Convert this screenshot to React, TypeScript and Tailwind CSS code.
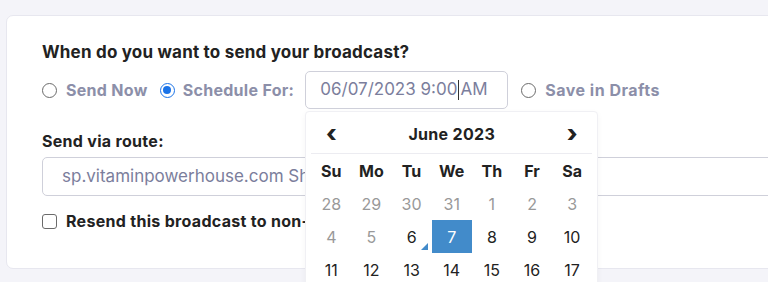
import React from "react";

const font = { fontFamily: "Inter, 'Noto Sans', sans-serif" };

const days: { n: number; muted?: boolean; today?: boolean; selected?: boolean }[] = [
  { n: 28, muted: true },
  { n: 29, muted: true },
  { n: 30, muted: true },
  { n: 31, muted: true },
  { n: 1, muted: true },
  { n: 2, muted: true },
  { n: 3, muted: true },
  { n: 4, muted: true },
  { n: 5, muted: true },
  { n: 6, today: true },
  { n: 7, selected: true },
  { n: 8 },
  { n: 9 },
  { n: 10 },
  { n: 11 },
  { n: 12 },
  { n: 13 },
  { n: 14 },
  { n: 15 },
  { n: 16 },
  { n: 17 },
];

const Radio = ({ checked }: { checked?: boolean }) =>
  checked ? (
    <span className="w-[15px] h-[15px] rounded-full border-[1.5px] border-[#1a73e8] flex items-center justify-center shrink-0">
      <span className="w-[8px] h-[8px] rounded-full bg-[#1a73e8]" />
    </span>
  ) : (
    <span className="w-[15px] h-[15px] rounded-full border border-[#6b6b6b] shrink-0" />
  );

// open datepicker dropdown, sits over the fields below it
const Calendar = () => (
  <div className="absolute left-0 top-[calc(100%+2px)] w-[293px] bg-white border border-[#f0f0f4] rounded-[4px] shadow-[0_2px_6px_rgba(0,0,0,0.04)] px-[5px]">
    <div className="h-[42px] border-b border-[#ececf1] grid grid-cols-7 items-center pt-[2px]">
      <span className="text-center text-[24px] font-extrabold text-[#222] leading-none">‹</span>
      <span className="col-span-5 text-center text-[16px] font-bold text-[#222] tracking-[0.3px]">June 2023</span>
      <span className="text-center text-[24px] font-extrabold text-[#222] leading-none">›</span>
    </div>
    <div className="grid grid-cols-7">
      {["Su", "Mo", "Tu", "We", "Th", "Fr", "Sa"].map((d) => (
        <div key={d} className="h-[33px] leading-[20px] flex items-center justify-center text-[16px] font-bold text-[#222]">
          {d}
        </div>
      ))}
      {days.map((d) => (
        <div
          key={d.n + (d.muted ? "m" : "")}
          className={`relative h-[33px] leading-[20px] flex items-center justify-center text-[16px] ${
            d.selected ? "bg-[#428bca] text-white" : d.muted ? "text-[#999]" : "text-[#222]"
          }`}
        >
          {d.n}
          {d.today && (
            <span className="absolute right-[4px] bottom-[3px] w-0 h-0 border-l-[7px] border-l-transparent border-b-[7px] border-b-[#428bca]" />
          )}
        </div>
      ))}
    </div>
  </div>
);

export default function App() {
  return (
    <div style={font} className="w-[768px] h-[282px] overflow-hidden bg-[#f4f4f9] pt-[15px] pl-[6px]">
      <div className="w-[820px] bg-white border border-[#e7e7ef] rounded-[7px] pl-[35px] pt-[24px] pb-[35px] pr-[40px]">
        <h2 className="text-[17px] leading-[24px] font-bold text-[#222] tracking-[0.2px]">
          When do you want to send your broadcast?
        </h2>

        <div className="mt-[7px] flex items-center h-[38px]">
          <label className="flex items-center gap-[9px]">
            <Radio />
            <span className="text-[16px] font-bold text-[#8c8fa9] tracking-[0.3px]">Send Now</span>
          </label>
          <label className="flex items-center gap-[8px] ml-[12px]">
            <Radio checked />
            <span className="text-[16px] font-bold text-[#8c8fa9] tracking-[0.3px]">Schedule For:</span>
          </label>
          <div className="relative ml-[11px] z-10">
            <div className="w-[203px] h-[38px] border border-[#cfd0da] rounded-[5px] flex items-center pl-[14px] text-[17px] text-[#7b7e9c]">
              06/07/2023 9:00
              <span className="w-px h-[20px] bg-[#333] mx-[1px]" />
              AM
            </div>
            <Calendar />
          </div>
          <label className="flex items-center gap-[9px] ml-[13px]">
            <Radio />
            <span className="text-[16px] font-bold text-[#8c8fa9] tracking-[0.5px]">Save in Drafts</span>
          </label>
        </div>

        <div className="mt-[20px] text-[16px] leading-[24px] font-bold text-[#222] tracking-[0.3px]">Send via route:</div>
        <div className="mt-[4px] h-[39px] border border-[#cfd0da] rounded-[5px] flex items-center pl-[19px] text-[17px] text-[#7b7e9c]">
          sp.vitaminpowerhouse.com Shared Route
        </div>

        <label className="mt-[13px] flex items-center gap-[9px] h-[24px]">
          <span className="w-[15px] h-[15px] rounded-[3px] border border-[#6b6b6b] shrink-0" />
          <span className="text-[16px] font-bold text-[#222] tracking-[0.3px]">Resend this broadcast to non-openers</span>
        </label>
      </div>
    </div>
  );
}
